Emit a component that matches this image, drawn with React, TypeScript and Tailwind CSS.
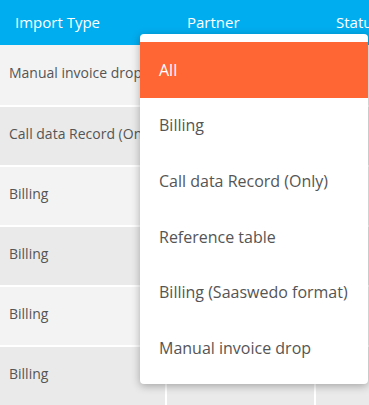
const rows = [
  "Manual invoice drop",
  "Call data Record (Only)",
  "Billing",
  "Billing",
  "Billing",
  "Billing",
];

const options = [
  "All",
  "Billing",
  "Call data Record (Only)",
  "Reference table",
  "Billing (Saaswedo format)",
  "Manual invoice drop",
];

const App = () => {
  return (
    <div
      className="relative w-[369px] h-[405px] overflow-hidden bg-white"
      style={{ fontFamily: '"Open Sans", sans-serif' }}
    >
      <div className="flex h-[45px] bg-[#00adef] text-white text-[15px] items-center">
        <div className="w-[167px] shrink-0 pl-[15px]">Import Type</div>
        <div className="w-[149px] shrink-0 pl-[20px]">Partner</div>
        <div className="flex-1 min-w-0 pl-[20px] whitespace-nowrap">Status</div>
      </div>
      {rows.map((r, i) => (
        <div
          key={i}
          className={`flex h-[60px] text-[14px] text-[#555] ${i > 0 ? "border-t-2 border-white" : ""} ${i % 2 === 0 ? "bg-[#f3f3f3]" : "bg-[#eaeaea]"}`}
        >
          <div className="w-[167px] shrink-0 pl-[9px] pb-[5px] flex items-center whitespace-nowrap overflow-hidden border-r-2 border-white">
            {r}
          </div>
          <div className="w-[149px] shrink-0 border-r-2 border-white"></div>
          <div className="flex-1"></div>
        </div>
      ))}

      <div className="absolute left-[140px] top-[34px] w-[228px] py-2 bg-white rounded-[4px] shadow-[0_2px_8px_rgba(0,0,0,0.3)]">
        {options.map((o, i) => (
          <div
            key={o}
            className={`h-[55.6px] flex items-center pl-[19px] text-[16px] whitespace-nowrap ${i === 0 ? "bg-[#ff6633] text-white" : "text-[#555]"}`}
          >
            {o}
          </div>
        ))}
      </div>
    </div>
  );
};

export default App;
